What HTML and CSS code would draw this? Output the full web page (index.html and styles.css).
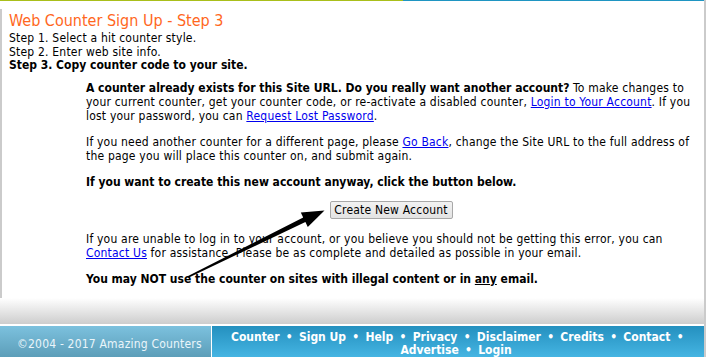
FILE: index.html
```html
<!DOCTYPE html>
<html>
<head>
<meta charset="utf-8">
<link rel="stylesheet" href="styles.css">
</head>
<body>
<div class="frame">
  <div class="topline"><span class="green"></span><span class="blue"></span></div>
  <div class="main">
    <h1 class="title">Web Counter Sign Up - Step 3</h1>
    <div class="steps">
      <div>Step 1. Select a hit counter style.</div>
      <div>Step 2. Enter web site info.</div>
      <div class="b">Step 3. Copy counter code to your site.</div>
    </div>
    <div class="content">
      <p class="first"><b>A counter already exists for this Site URL. Do you really want another account?</b> To make changes to your current counter, get your counter code, or re-activate a disabled counter, <a href="#">Login to Your Account</a>. If you lost your password, you can <a href="#">Request Lost Password</a>.</p>
      <p>If you need another counter for a different page, please <a href="#">Go Back</a>, change the Site URL to the full address of the page you will place this counter on, and submit again.</p>
      <p><b>If you want to create this new account anyway, click the button below.</b></p>
      <p class="btnrow"><button class="btn" type="button">Create New Account</button></p>
      <p>If you are unable to log in to your account, or you believe you should not be getting this error, you can <a href="#">Contact Us</a> for assistance. Please be as complete and detailed as possible in your email.</p>
      <p><b>You may NOT use the counter on sites with illegal content or in <u>any</u> email.</b></p>
    </div>
    <div class="fade"></div>
  </div>
  <div class="footer">
    <div class="copy">©2004 - 2017 Amazing Counters</div>
    <div class="links">
      <a href="#">Counter</a> • <a href="#">Sign Up</a> • <a href="#">Help</a> • <a href="#">Privacy</a> • <a href="#">Disclaimer</a> • <a href="#">Credits</a> • <a href="#">Contact</a> •<br>
      <a href="#">Advertise</a> • <a href="#">Login</a>
    </div>
  </div>
  <svg class="arrow" width="706" height="357" viewBox="0 0 706 357">
    <polygon points="188.4,277.7 305.4,221.9 307.8,226.9 324.5,210.5 300.8,212.5 303.2,217.5 187.6,276.3" fill="#000"/>
  </svg>
</div>
</body>
</html>
```
FILE: styles.css
```css
html, body {
  margin: 0;
  padding: 0;
  background: #fff;
}
body {
  font-family: "DejaVu Sans Condensed", "DejaVu Sans", sans-serif;
  font-size: 12px;
  color: #000;
  width: 706px;
  height: 357px;
  overflow: hidden;
  letter-spacing: 0.2px;
}
b, .b, .links {
  letter-spacing: 0;
}
.frame {
  position: relative;
  width: 704px;
  border-right: 2px solid #cbcbcb;
}
.topline {
  display: flex;
  height: 1px;
}
.topline .green {
  width: 403px;
  background: #a9bf1a;
}
.topline .blue {
  flex: 1;
  background: #1f95c2;
}
.main {
  margin-top: 8px;
  border-left: 2px solid #cbcbcb;
  padding-left: 7px;
}
.title {
  margin: 0;
  font-weight: normal;
  font-size: 16px;
  letter-spacing: 0;
  line-height: 23px;
  height: 23px;
  color: #ff671d;
}
.steps {
  line-height: 13.5px;
}
.b { font-weight: bold; }
.content {
  margin: 0 8px 0 77px;
  line-height: 14px;
}
.content p {
  margin: 12px 0;
}
.content p.first {
  margin-top: 8px;
}
.content a {
  color: #0000ee;
}
.content .btnrow {
  display: flex;
  justify-content: center;
  height: 18px;
  margin-top: 8px;
  margin-bottom: 13px;
}
.btn {
  width: 123px;
  height: 18px;
  padding: 0;
  font-family: inherit;
  font-size: 12px;
  letter-spacing: 0.2px;
  color: #000;
  background: linear-gradient(#f2f2f2, #e3e3e3);
  border: 1px solid #a8a8a8;
  border-radius: 2px;
}
.fade {
  height: 26px;
  margin-left: -9px;
  background: linear-gradient(#ffffff, #cdcdcd);
  border-bottom: 1px solid #fff;
}
.footer {
  display: flex;
  height: 44px;
  margin-top: 1px;
  color: #fff;
}
.copy {
  width: 194px;
  padding: 11px 0 0 17px;
  background: linear-gradient(#7cc1de, #4f8fa9);
  border-right: 1px solid #fff;
  color: #eaf5fa;
}
.links {
  flex: 1;
  padding: 5px 4px 0 0;
  text-align: center;
  line-height: 13.5px;
  font-weight: bold;
  background: linear-gradient(#2490bf, #53c4f1);
}
.links a {
  color: #fff;
  text-decoration: none;
  padding: 0 2.5px;
}
.arrow {
  position: absolute;
  left: 0;
  top: 0;
  pointer-events: none;
}
```
